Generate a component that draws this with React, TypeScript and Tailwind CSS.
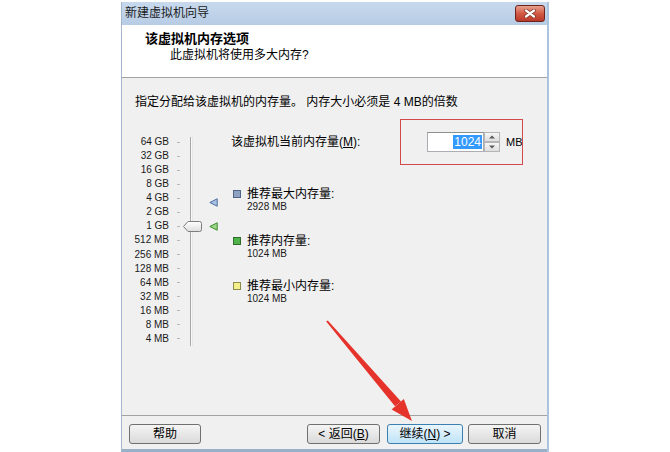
import React, { FC } from 'react';

const sizes = [
  '64 GB', '32 GB', '16 GB', '8 GB', '4 GB', '2 GB', '1 GB',
  '512 MB', '256 MB', '128 MB', '64 MB', '32 MB', '16 MB', '8 MB', '4 MB',
];

const legend = [
  { title: '推荐最大内存量:', value: '2928 MB', box: 'bg-[#8ea2c2] border-[#50648a]', gap: 'mt-[35px]' },
  { title: '推荐内存量:', value: '1024 MB', box: 'bg-[#4fb34a] border-[#2f6e2a]', gap: 'mt-[22px]' },
  { title: '推荐最小内存量:', value: '1024 MB', box: 'bg-[#f3ef8a] border-[#8d8a4c]', gap: 'mt-[20px]' },
];

const WinButton: FC<{ className?: string; primary?: boolean; children: React.ReactNode }> = ({
  className,
  primary,
  children,
}) => (
  <div
    className={`h-[20px] flex items-center justify-center rounded-[3px] border text-[12px] leading-none text-black ${
      primary
        ? 'border-[#3c7fb1] bg-gradient-to-b from-[#eaf6fd] to-[#bfe3f8]'
        : 'border-[#707070] bg-gradient-to-b from-[#f5f5f5] to-[#dadada]'
    } ${className ?? ''}`}
  >
    {children}
  </div>
);

const Thumb: FC = () => (
  <svg width="19" height="11" viewBox="0 0 19 11" className="absolute left-[1px] top-[91px]">
    <defs>
      <linearGradient id="thumb" x1="0" y1="0" x2="0" y2="1">
        <stop offset="0" stopColor="#ffffff" />
        <stop offset="1" stopColor="#dedede" />
      </linearGradient>
    </defs>
    <path d="M0.5 5.5 L5 0.5 H16.5 Q18.5 0.5 18.5 2.5 V8.5 Q18.5 10.5 16.5 10.5 H5 Z" fill="url(#thumb)" stroke="#7d7d7d" />
  </svg>
);

const Marker: FC<{ fill: string; stroke: string; className: string }> = ({ fill, stroke, className }) => (
  <svg width="9" height="9" viewBox="0 0 9 9" className={className}>
    <path d="M0.8 4.5 L8.2 0.8 V8.2 Z" fill={fill} stroke={stroke} strokeLinejoin="round" />
  </svg>
);

// spinner halves: up then down
const spinArrows = ['M4 5.5 L7 2.5 L10 5.5 Z', 'M4 2.5 L7 5.5 L10 2.5 Z'];

const App: FC = () => {
  return (
    <div className="relative w-[670px] h-[452px] overflow-hidden bg-white font-['Liberation_Sans','Noto_Sans_CJK_SC',sans-serif] text-black">
      <div className="ml-[121px] mt-[2px] w-[428px] h-[450px] flex flex-col border-l border-l-[#a3b6cc] border-r-2 border-r-[#aac3de]">
        {/* title bar */}
        <div className="h-[23px] flex items-start justify-between bg-gradient-to-b from-[#c8d9ed] to-[#b7cce5]">
          <span className="pl-[3px] pt-[3px] text-[12px] leading-[16px] text-[#1b1b1b]">新建虚拟机向导</span>
          <div className="mt-[3px] mr-[2px] w-[30px] h-[17px] rounded-[3px] border border-[#6b231b] bg-gradient-to-b from-[#e6a08e] via-[#d25a45] to-[#b9382a] flex items-center justify-center">
            <svg width="12" height="9" viewBox="0 0 12 9">
              <path d="M2 1.5 L10 7.5 M10 1.5 L2 7.5" stroke="#7a2a20" strokeWidth="3.6" strokeLinecap="round" />
              <path d="M2 1.5 L10 7.5 M10 1.5 L2 7.5" stroke="#ffffff" strokeWidth="2.2" strokeLinecap="round" />
            </svg>
          </div>
        </div>

        {/* header */}
        <div className="h-[53px] bg-white border-b border-[#a3a3a3] pl-[23px] pt-[6px]">
          <div className="text-[13px] leading-[16px] font-bold">该虚拟机内存选项</div>
          <div className="ml-[25px] text-[12px] leading-[16px]">此虚拟机将使用多大内存?</div>
        </div>

        {/* body */}
        <div className="flex-1 bg-[#f0f0f0] flex flex-col">
          <p className="pl-[13px] pt-[16px] text-[12px] leading-[16px]">
            指定分配给该虚拟机的内存量。 内存大小必须是 4 MB的倍数
          </p>
          <div className="flex mt-[20px]">
            {/* scale labels */}
            <div className="flex flex-col pt-[5px] ml-[6px]">
              {sizes.map((s) => (
                <div key={s} className="flex items-center h-[14.07px]">
                  <span className="w-[41px] text-right text-[10px] leading-none text-[#1a1a1a]">{s}</span>
                  <span className="ml-[8px] w-[3px] h-px bg-[#b8b8b8]" />
                </div>
              ))}
            </div>
            {/* track */}
            <div className="relative ml-[2px] w-[20px] h-[216px]">
              <div className="ml-[8px] mt-[7px] w-[3px] h-[209px] border-l border-l-[#a8a8a8] border-r border-r-[#e6e6e6] bg-[#f7f7f7]" />
              <Thumb />
            </div>
            {/* markers */}
            <div className="flex flex-col ml-[7px]">
              <Marker className="mt-[68px]" fill="#a9c1e2" stroke="#4d6d9c" />
              <Marker className="mt-[15px]" fill="#9ad686" stroke="#3b8c2c" />
            </div>
            {/* right side */}
            <div className="flex flex-col ml-[13px]">
              <div className="flex items-center mt-[2px] h-[20px]">
                <span className="w-[196px] text-[12px] leading-none">
                  该虚拟机当前内存量(<span className="underline">M</span>):
                </span>
                <div className="w-[57px] h-[20px] bg-white border border-[#abadb3] border-t-[#8e8f8f] flex items-center justify-end pr-px">
                  <span className="bg-[#3399ff] text-white text-[12px] leading-[14px] px-px">1024</span>
                </div>
                <div className="w-[16px] h-[20px] flex flex-col">
                  {spinArrows.map((d) => (
                    <div key={d} className="h-[10px] border border-[#b5b5b5] bg-gradient-to-b from-[#f6f6f6] to-[#dedede] flex items-center justify-center">
                      <svg width="14" height="8" viewBox="0 0 14 8">
                        <path d={d} fill="#5a5a5a" />
                      </svg>
                    </div>
                  ))}
                </div>
                <span className="ml-[6px] text-[11px] leading-none">MB</span>
              </div>
              {legend.map((l) => (
                <div key={l.title} className={`flex ${l.gap}`}>
                  <span className={`mt-[3px] ml-[2px] w-[8px] h-[8px] border ${l.box}`} />
                  <div className="ml-[6px] flex flex-col">
                    <span className="text-[12px] leading-[14px]">{l.title}</span>
                    <span className="text-[10px] leading-[11px] text-[#1a1a1a]">{l.value}</span>
                  </div>
                </div>
              ))}
            </div>
          </div>
        </div>

        {/* footer */}
        <div className="h-[34px] border-t border-[#a3a3a3] bg-[#f0f0f0] flex items-start pt-[8px] pl-[7px] pr-[6px]">
          <WinButton className="w-[72px]">帮助</WinButton>
          <div className="flex-1" />
          <WinButton className="w-[73px]">
            &lt; 返回(<span className="underline">B</span>)
          </WinButton>
          <WinButton primary className="ml-[7px] w-[76px]">
            继续(<span className="underline">N</span>) &gt;
          </WinButton>
          <WinButton className="ml-[5px] w-[73px]">取消</WinButton>
        </div>
        <div className="h-[3px] bg-[#98b0c8]" />
      </div>

      {/* annotation: red box */}
      <div className="absolute left-[400px] top-[119px] w-[123px] h-[46px] border border-[#d24a4a]" />

      {/* annotation: arrow */}
      <svg className="absolute left-0 top-0 pointer-events-none" width="670" height="452" viewBox="0 0 670 452">
        <polygon points="326.2,321.6 327.8,320.4 401,401.4 395,406.2" fill="#e5322b" />
        <polygon points="412,421 391.6,409.4 403.8,399" fill="#e5322b" />
      </svg>
    </div>
  );
};

export default App;
